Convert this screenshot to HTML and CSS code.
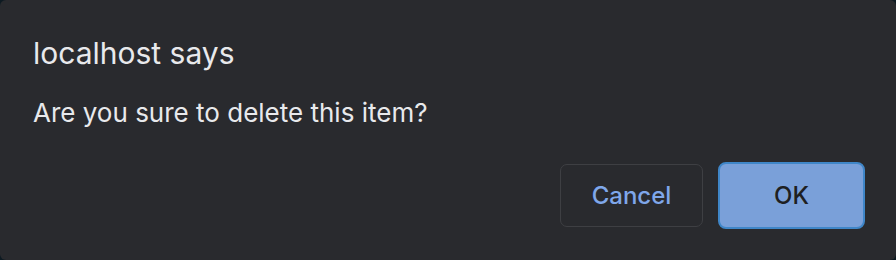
FILE: index.html
```html
<!DOCTYPE html>
<html>
<head>
	<title>localhost says</title>
	<meta name="viewport" content="width=device-width, initial-scale=1">
	<link rel="stylesheet" href="styles.css">
</head>
<body>

	<div id="dialog">
		<div class="title">localhost says</div>
		<div class="message">Are you sure to delete this item?</div>
		<div class="buttons">
			<div class="btn cancel">Cancel</div>
			<div class="btn ok">OK</div>
		</div>
	</div>

</body>
</html>
```

FILE: styles.css
```css
* {
	box-sizing: border-box;
}

html, body {
	margin: 0;
	height: 100%;
	background-color: #0d1a22;
}

#dialog {
	height: 260px;
	width: 896px;
	padding: 35px 31px 0 33px;
	background-color: #292a2e;
	border-radius: 6px;
	font-family: Inter, "Noto Sans", sans-serif;
	color: #e8e9ec;
	display: flex;
	flex-direction: column;
}

.title {
	font-size: 30px;
	line-height: 36px;
}

.message {
	margin-top: 26px;
	font-size: 26px;
	line-height: 32px;
}

.buttons {
	margin-top: 33px;
	display: flex;
	justify-content: flex-end;
	align-items: center;
	gap: 15px;
}

.btn {
	display: flex;
	justify-content: center;
	align-items: center;
	font-size: 24px;
	font-weight: 500;
	cursor: pointer;
}

.cancel {
	width: 143px;
	height: 63px;
	border: 1px solid #3e3f43;
	border-radius: 7px;
	color: #7fa7ea;
}

.ok {
	width: 147px;
	height: 67px;
	border: 2px solid #3f86c8;
	border-radius: 8px;
	background-color: #7aa0d9;
	color: #1e1f22;
}
```
